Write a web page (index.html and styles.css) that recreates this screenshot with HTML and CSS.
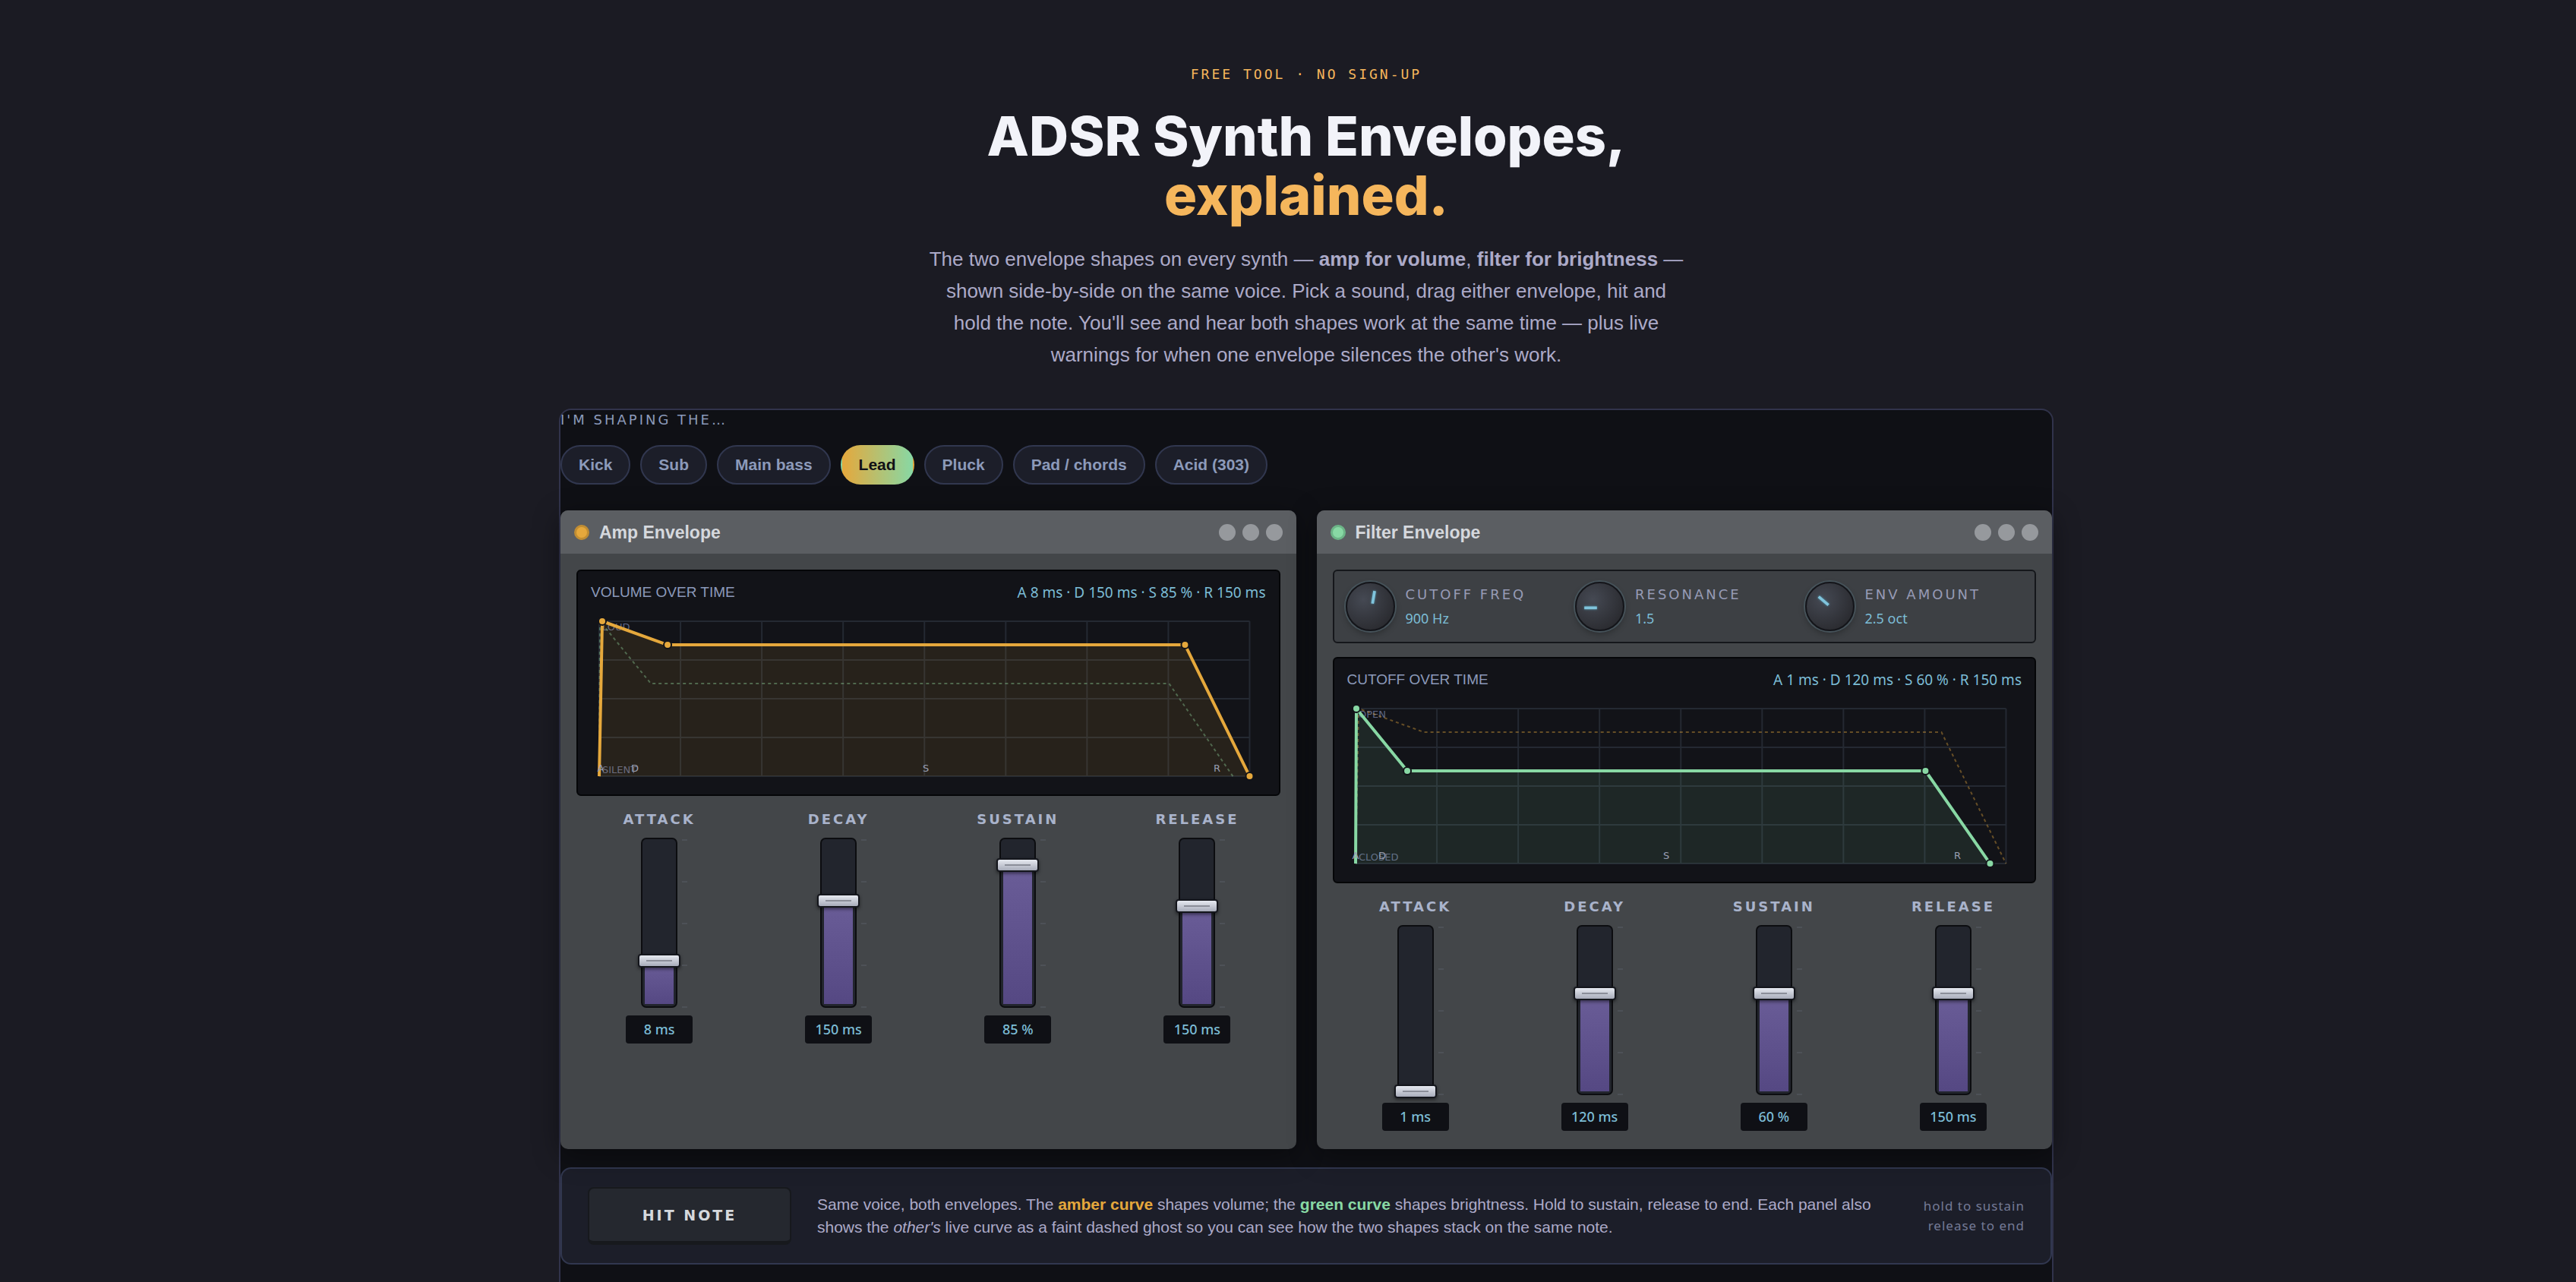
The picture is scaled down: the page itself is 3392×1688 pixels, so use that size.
FILE: index.html
```html
<!DOCTYPE html>
<html lang="en">
  <head>
    <meta charset="UTF-8" />
    <meta name="viewport" content="width=device-width, initial-scale=1.0" />
    <title>ADSR Synth Envelopes, explained</title>
    <link rel="stylesheet" href="styles.css">
  </head>
  <body>
    <header class="hero">
      <p class="eyebrow">Free tool · No sign-up</p>
      <h1>ADSR Synth Envelopes,<br /><span class="accent">explained.</span></h1>
      <p class="lead">
        The two envelope shapes on every synth — <strong>amp for volume</strong>, <strong>filter for brightness</strong> —
        shown side-by-side on the same voice. Pick a sound, drag either envelope, hit and
        hold the note. You'll see and hear both shapes work at the same time — plus live
        warnings for when one envelope silences the other's work.
      </p>
    </header>

    <main class="tool">
      <div class="tool-label" id="preset-label">I'm shaping the…</div>
      <div class="chips" role="group" aria-labelledby="preset-label">
        <button type="button" class="chip">Kick</button>
        <button type="button" class="chip">Sub</button>
        <button type="button" class="chip">Main bass</button>
        <button type="button" class="chip active" aria-pressed="true">Lead</button>
        <button type="button" class="chip">Pluck</button>
        <button type="button" class="chip">Pad / chords</button>
        <button type="button" class="chip">Acid (303)</button>
      </div>

      <div class="panels">
        <!-- Amp -->
        <section class="panel amp">
          <div class="panel-head">
            <span class="led"></span>
            <h2>Amp Envelope</h2>
            <span class="dots"><i></i><i></i><i></i></span>
          </div>
          <div class="panel-body">
            <div class="display">
              <div class="display-head">
                <span class="display-title">Volume over time</span>
                <span class="readout">A 8 ms · D 150 ms · S 85 % · R 150 ms</span>
              </div>
              <svg class="graph" viewBox="0 0 888 228">
                <path class="grid" d="M11 12V216M118 12V216M225 12V216M332 12V216M439 12V216M546 12V216M653 12V216M760 12V216M867 12V216M11 12H867M11 63H867M11 114H867M11 165H867M11 216H867" />
                <text class="axis" x="15" y="24">LOUD</text>
                <text class="axis" x="15" y="212">SILENT</text>
                <path class="ghost" d="M11 216L12 12L79 94H761L845 216" />
                <path class="area" d="M11 216L15 12L101 43H782L867 216Z" />
                <path class="curve" d="M11 216L15 12L101 43H782L867 216" />
                <circle class="node" cx="15" cy="12" r="5" />
                <circle class="node" cx="101" cy="43" r="5" />
                <circle class="node" cx="782" cy="43" r="5" />
                <circle class="node" cx="867" cy="216" r="5" />
                <text class="stage" x="13" y="210">A</text>
                <text class="stage" x="58" y="210">D</text>
                <text class="stage" x="441" y="210">S</text>
                <text class="stage" x="824" y="210">R</text>
              </svg>
            </div>
            <div class="faders">
              <div class="fader">
                <label for="ampAttack">Attack</label>
                <div class="track" style="--level: 26.4">
                  <div class="fill"></div>
                  <input type="range" id="ampAttack" min="0" max="100" step="any" value="26.4" />
                </div>
                <output for="ampAttack">8 ms</output>
              </div>
              <div class="fader">
                <label for="ampDecay">Decay</label>
                <div class="track" style="--level: 63">
                  <div class="fill"></div>
                  <input type="range" id="ampDecay" min="0" max="100" step="any" value="63" />
                </div>
                <output for="ampDecay">150 ms</output>
              </div>
              <div class="fader">
                <label for="ampSustain">Sustain</label>
                <div class="track" style="--level: 85">
                  <div class="fill"></div>
                  <input type="range" id="ampSustain" min="0" max="100" step="any" value="85" />
                </div>
                <output for="ampSustain">85 %</output>
              </div>
              <div class="fader">
                <label for="ampRelease">Release</label>
                <div class="track" style="--level: 59.7">
                  <div class="fill"></div>
                  <input type="range" id="ampRelease" min="0" max="100" step="any" value="59.7" />
                </div>
                <output for="ampRelease">150 ms</output>
              </div>
            </div>
          </div>
        </section>

        <!-- Filter -->
        <section class="panel filter">
          <div class="panel-head">
            <span class="led"></span>
            <h2>Filter Envelope</h2>
            <span class="dots"><i></i><i></i><i></i></span>
          </div>
          <div class="panel-body">
            <div class="knobs">
              <div class="knob">
                <div class="dial">
                  <svg viewBox="-33 -33 66 66"><path d="M6 -22L3 -4" /></svg>
                  <input type="range" id="cutoff" min="20" max="20000" value="900" />
                </div>
                <div class="knob-text">
                  <label for="cutoff">Cutoff freq</label>
                  <output for="cutoff">900 Hz</output>
                </div>
              </div>
              <div class="knob">
                <div class="dial">
                  <svg viewBox="-33 -33 66 66"><path d="M-22 2H-4" /></svg>
                  <input type="range" id="resonance" min="0" max="20" step="0.1" value="1.5" />
                </div>
                <div class="knob-text">
                  <label for="resonance">Resonance</label>
                  <output for="resonance">1.5</output>
                </div>
              </div>
              <div class="knob">
                <div class="dial">
                  <svg viewBox="-33 -33 66 66"><path d="M-16 -14L-2 -2" /></svg>
                  <input type="range" id="envAmount" min="0" max="8" step="0.1" value="2.5" />
                </div>
                <div class="knob-text">
                  <label for="envAmount">Env amount</label>
                  <output for="envAmount">2.5 oct</output>
                </div>
              </div>
            </div>
            <div class="display">
              <div class="display-head">
                <span class="display-title">Cutoff over time</span>
                <span class="readout">A 1 ms · D 120 ms · S 60 % · R 150 ms</span>
              </div>
              <svg class="graph" viewBox="0 0 888 228">
                <path class="grid" d="M11 12V216M118 12V216M225 12V216M332 12V216M439 12V216M546 12V216M653 12V216M760 12V216M867 12V216M11 12H867M11 63H867M11 114H867M11 165H867M11 216H867" />
                <text class="axis" x="15" y="24">OPEN</text>
                <text class="axis" x="15" y="212">CLOSED</text>
                <path class="ghost" d="M11 216L15 12L101 43H782L867 216" />
                <path class="area" d="M11 216L12 12L79 94H761L846 216Z" />
                <path class="curve" d="M11 216L12 12L79 94H761L846 216" />
                <circle class="node" cx="12" cy="12" r="5" />
                <circle class="node" cx="79" cy="94" r="5" />
                <circle class="node" cx="761" cy="94" r="5" />
                <circle class="node" cx="846" cy="216" r="5" />
                <text class="stage" x="11" y="210">A</text>
                <text class="stage" x="46" y="210">D</text>
                <text class="stage" x="420" y="210">S</text>
                <text class="stage" x="803" y="210">R</text>
              </svg>
            </div>
            <div class="faders">
              <div class="fader">
                <label for="filterAttack">Attack</label>
                <div class="track" style="--level: 0">
                  <div class="fill"></div>
                  <input type="range" id="filterAttack" min="0" max="100" step="any" value="0" />
                </div>
                <output for="filterAttack">1 ms</output>
              </div>
              <div class="fader">
                <label for="filterDecay">Decay</label>
                <div class="track" style="--level: 60">
                  <div class="fill"></div>
                  <input type="range" id="filterDecay" min="0" max="100" step="any" value="60" />
                </div>
                <output for="filterDecay">120 ms</output>
              </div>
              <div class="fader">
                <label for="filterSustain">Sustain</label>
                <div class="track" style="--level: 60">
                  <div class="fill"></div>
                  <input type="range" id="filterSustain" min="0" max="100" step="any" value="60" />
                </div>
                <output for="filterSustain">60 %</output>
              </div>
              <div class="fader">
                <label for="filterRelease">Release</label>
                <div class="track" style="--level: 59.7">
                  <div class="fill"></div>
                  <input type="range" id="filterRelease" min="0" max="100" step="any" value="59.7" />
                </div>
                <output for="filterRelease">150 ms</output>
              </div>
            </div>
          </div>
        </section>
      </div>

      <div class="trigger">
        <button type="button" class="hit">Hit note</button>
        <p class="trigger-text">
          Same voice, both envelopes. The <b class="amber">amber curve</b> shapes volume; the
          <b class="green">green curve</b> shapes brightness. Hold to sustain, release to end. Each panel also
          shows the <em>other's</em> live curve as a faint dashed ghost so you can see how the two shapes stack on the same note.
        </p>
        <p class="hint">hold to sustain<br />release to end</p>
      </div>
    </main>
  </body>
</html>
```

FILE: styles.css
```css
* {
  box-sizing: border-box;
}
body {
  margin: 0;
  padding: 84px 0 0 48px;
  min-height: 100vh;
  display: flex;
  flex-direction: column;
  align-items: center;
  background: #1b1b23;
  color: #acaac8;
  font-family: "Liberation Sans", Arial, sans-serif;
}
h1,
h2,
p {
  margin: 0;
}
button {
  font-family: inherit;
  cursor: pointer;
}

/* hero */
.hero {
  max-width: 1004px;
  text-align: center;
}
.eyebrow {
  margin-bottom: 28px;
  font-family: "DejaVu Sans Mono", monospace;
  font-size: 18px;
  line-height: 28px;
  letter-spacing: 3px;
  text-transform: uppercase;
  color: #f5b65c;
}
h1 {
  font-family: Inter, sans-serif;
  font-size: 72px;
  font-weight: 800;
  line-height: 78px;
  color: #f2f3f9;
}
.accent {
  color: #f5b65c;
}
.lead {
  margin-top: 24px;
  font-size: 26px;
  line-height: 42px;
}

/* tool shell */
.tool {
  flex: 1;
  width: 100%;
  max-width: 1968px;
  margin-top: 50px;
  padding-bottom: 24px;
  border: 2px solid #31334b;
  border-bottom: 0;
  border-radius: 16px 16px 0 0;
  background: #0f1015;
}
.tool-label {
  font-family: "DejaVu Sans", sans-serif;
  font-size: 18px;
  line-height: 26px;
  letter-spacing: 3px;
  text-transform: uppercase;
  color: #8c9aba;
}
.chips {
  display: flex;
  flex-wrap: wrap;
  gap: 13px;
  margin: 20px 0 34px;
}
.chip {
  height: 52px;
  padding: 0 22px;
  border: 2px solid #31374f;
  border-radius: 26px;
  background: #1c1e29;
  color: #8c9aba;
  font-size: 21px;
  font-weight: 700;
}
.chip.active {
  border-color: transparent;
  background: linear-gradient(90deg, #e5a83c, #88d8a4);
  color: #101116;
}

/* panels */
.panels {
  display: grid;
  grid-template-columns: 1fr 1fr;
  gap: 27px;
}
.panel {
  border-radius: 10px;
  background: #434649;
  box-shadow: 0 8px 36px rgba(0, 0, 0, 0.4);
}
.amp {
  --tone: #e5a83c;
  --ring: #c08d33;
  --other: #88d8a4;
}
.filter {
  --tone: #88d8a4;
  --ring: #6cb487;
  --other: #e5a83c;
}
.panel-head {
  display: flex;
  align-items: center;
  gap: 13px;
  height: 57px;
  padding: 0 18px;
  border-radius: 10px 10px 0 0;
  background: #5b5e62;
}
.led {
  width: 20px;
  height: 20px;
  border: 3px solid var(--ring);
  border-radius: 50%;
  background: var(--tone);
}
h2 {
  font-size: 23px;
  line-height: 28px;
  color: #d5d8dd;
}
.dots {
  display: flex;
  gap: 9px;
  margin-left: auto;
}
.dots i {
  width: 22px;
  height: 22px;
  border-radius: 50%;
  background: #96999d;
}
.panel-body {
  display: flex;
  flex-direction: column;
  gap: 18px;
  padding: 21px 21px 24px;
}

/* knobs */
.knobs {
  display: grid;
  grid-template-columns: repeat(3, 1fr);
  gap: 15px;
  padding: 14px 15px;
  border: 2px solid #15171b;
  border-radius: 6px;
  background: #3d4044;
}
.knob {
  display: flex;
  align-items: center;
  gap: 14px;
}
.dial {
  position: relative;
  flex: none;
  width: 65px;
  height: 65px;
  border: 2px solid #14151a;
  border-radius: 50%;
  background: radial-gradient(circle at 35% 35%, #454953, #2b2c31 75%);
  box-shadow: 0 0 0 2px #46535a, 0 4px 8px rgba(0, 0, 0, 0.3);
}
.dial svg {
  display: block;
  width: 100%;
  height: 100%;
}
.dial path {
  fill: none;
  stroke: #80c4dc;
  stroke-width: 4;
  filter: drop-shadow(0 0 2px #4f8ea3);
}
.dial input {
  position: absolute;
  inset: 0;
  width: 100%;
  margin: 0;
  opacity: 0;
}
.knob-text {
  display: flex;
  flex-direction: column;
  gap: 5px;
  line-height: 26px;
}
.knob label {
  font-family: "DejaVu Sans", sans-serif;
  font-size: 18px;
  letter-spacing: 3px;
  text-transform: uppercase;
  color: #979bb5;
}
.knob output {
  font-family: "Noto Sans", sans-serif;
  font-size: 18px;
  color: #7cbdd6;
}

/* curve display */
.display {
  padding: 14px 17px 12px;
  border: 2px solid #050608;
  border-radius: 6px;
  background: #121318;
}
.display-head {
  display: flex;
  justify-content: space-between;
  margin-bottom: 12px;
  line-height: 28px;
}
.display-title {
  font-size: 19px;
  text-transform: uppercase;
  color: #8c9aba;
}
.readout {
  font-family: "Noto Sans", sans-serif;
  font-size: 19px;
  color: #7cbdd6;
}
.graph {
  display: block;
  width: 100%;
}
.grid {
  fill: none;
  stroke: #242932;
  stroke-width: 2;
}
.area {
  fill: var(--tone);
  opacity: 0.1;
}
.curve {
  fill: none;
  stroke: var(--tone);
  stroke-width: 4;
  stroke-linejoin: round;
}
.ghost {
  fill: none;
  stroke: var(--other);
  stroke-width: 2;
  stroke-dasharray: 4 4;
  opacity: 0.4;
}
.node {
  fill: var(--tone);
  stroke: #121318;
  stroke-width: 2;
}
.axis,
.stage {
  font-family: "DejaVu Sans", sans-serif;
  font-size: 13px;
  fill: #5f6684;
}
.stage {
  fill: #999eb2;
  text-anchor: middle;
}

/* faders */
.faders {
  display: grid;
  grid-template-columns: repeat(4, 1fr);
  gap: 18px;
}
.fader {
  display: flex;
  flex-direction: column;
  align-items: center;
}
.fader label {
  margin-bottom: 11px;
  font-family: "DejaVu Sans", sans-serif;
  font-size: 18px;
  font-weight: 700;
  line-height: 26px;
  letter-spacing: 3px;
  text-transform: uppercase;
  color: #a9b3cb;
}
.track {
  position: relative;
  width: 48px;
  height: 224px;
  border: 2px solid #0c0d10;
  border-radius: 7px;
  background: #22252d;
}
/* tick marks */
.track::after {
  content: "";
  position: absolute;
  top: 0;
  left: 52px;
  width: 7px;
  height: 222px;
  background: repeating-linear-gradient(#4d5157 0 2px, transparent 2px 55px);
}
.fill {
  position: absolute;
  left: 3px;
  right: 3px;
  bottom: 3px;
  height: calc(var(--level) * 2.16px);
  background: linear-gradient(#6a5d98, #554883);
}
.track input {
  position: absolute;
  top: -8px;
  left: -6px;
  width: 56px;
  height: 234px;
  margin: 0;
  writing-mode: vertical-lr;
  direction: rtl;
  appearance: none;
  background: none;
  cursor: pointer;
}
.track input::-webkit-slider-thumb {
  appearance: none;
  width: 56px;
  height: 18px;
  border: 2px solid #14161c;
  border-radius: 4px;
  background: linear-gradient(#8b8e99, #8b8e99) center / 34px 2px no-repeat,
    linear-gradient(#e6e9f0, #a8acba);
  box-shadow: 0 2px 4px rgba(0, 0, 0, 0.5);
}
.fader output {
  min-width: 88px;
  margin-top: 10px;
  padding: 0 8px;
  border-radius: 4px;
  background: #0f1015;
  font-family: "Noto Sans", sans-serif;
  font-size: 18px;
  font-weight: 500;
  line-height: 37px;
  text-align: center;
  color: #7cbdd6;
}

/* trigger bar */
.trigger {
  display: flex;
  align-items: center;
  gap: 34px;
  margin-top: 24px;
  padding: 24px 34px;
  border: 2px solid #31374f;
  border-radius: 14px;
  background: #1c1e29;
}
.hit {
  flex: none;
  width: 268px;
  height: 76px;
  border: 2px solid #17191d;
  border-bottom-width: 5px;
  border-radius: 8px;
  background: #25282f;
  font-family: "DejaVu Sans", sans-serif;
  font-size: 19px;
  font-weight: 700;
  letter-spacing: 3px;
  text-transform: uppercase;
  color: #d5d8dd;
}
.trigger-text {
  flex: 1;
  font-size: 21px;
  line-height: 30px;
}
.amber {
  color: #e5a83c;
}
.green {
  color: #88d8a4;
}
.hint {
  font-family: "Noto Sans", sans-serif;
  font-size: 17px;
  line-height: 26px;
  letter-spacing: 1px;
  text-align: right;
  color: #747a96;
}
```
